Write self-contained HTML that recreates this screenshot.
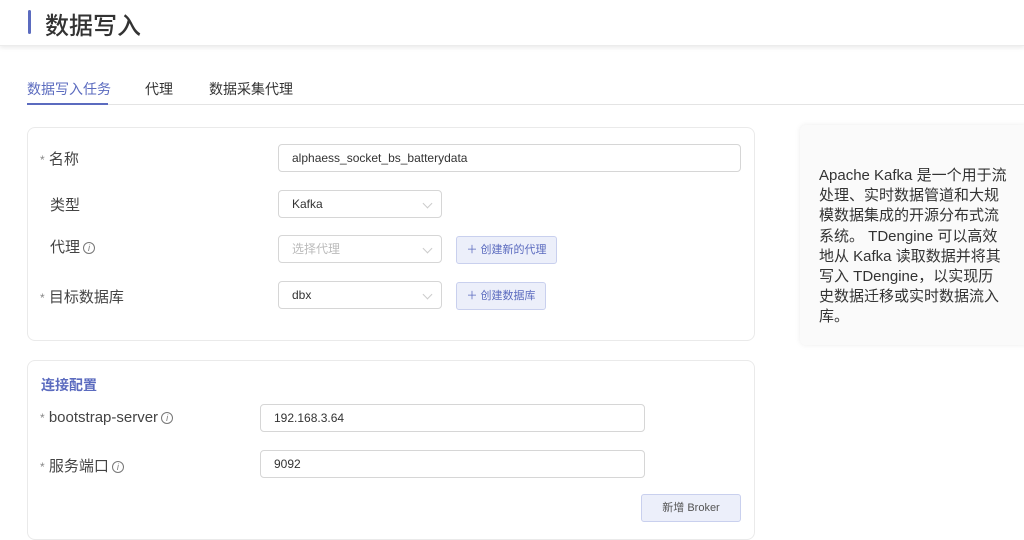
<!DOCTYPE html>
<html><head><meta charset="utf-8"><style>
*{margin:0;padding:0;box-sizing:border-box}
body{width:1024px;height:525px;overflow:hidden;background:#fff;font-family:"Liberation Sans","Noto Sans CJK SC",sans-serif;color:#333;position:relative}
.a{position:absolute}
.hdr{left:0;top:0;width:1024px;height:46px;background:#fff;box-shadow:0 2px 4px rgba(0,0,0,.08);border-bottom:1px solid #ececec}
.bar{left:28px;top:10px;width:3px;height:24px;background:#5b6bbf;border-radius:2px}
.title{left:45px;top:6px;font-size:24px;color:#333;font-weight:500}
.tab{top:79px;font-size:14px;color:#333}
.card{border:1px solid #eaeaea;border-radius:8px;background:#fff}
.lbl{font-size:15px;color:#444}
.star{color:#888;font-size:12px}
.inp{border:1px solid #d6d6d6;border-radius:4px;height:28px;font-size:12px;line-height:26px;padding-left:13px;color:#333;background:#fff}
.ph{color:#bbb}
.chev{position:absolute;right:10px;top:9px;width:7px;height:7px;border-right:1px solid #ccc;border-bottom:1px solid #ccc;transform:rotate(45deg)}
.btn{border:1px solid #c9d0ee;background:#eceffa;border-radius:3px;height:28px;font-size:11px;color:#5b6bbf;line-height:26px;text-align:center}
.i{display:inline-block;width:12px;height:12px;border:1px solid #777;border-radius:50%;font-size:9px;line-height:10px;text-align:center;font-style:italic;color:#777;vertical-align:1px;margin-left:3px}
.side{left:800px;top:125px;width:230px;height:220px;background:#fafafa;box-shadow:0 0 6px rgba(0,0,0,.08);border-radius:6px}
.side p{position:absolute;left:19px;top:41px;white-space:nowrap;font-size:15px;line-height:20.2px;color:#333}
</style></head><body>
<div class="a hdr"></div>
<div class="a bar"></div>
<div class="a title">数据写入</div>
<div class="a tab" style="left:27px;color:#5b6bbf">数据写入任务</div>
<div class="a tab" style="left:145px">代理</div>
<div class="a tab" style="left:209px">数据采集代理</div>
<div class="a" style="left:27px;top:104px;width:997px;height:1px;background:#e4e4e4"></div>
<div class="a" style="left:27px;top:103px;width:81px;height:2px;background:#5b6bbf"></div>

<div class="a card" style="left:27px;top:127px;width:728px;height:214px"></div>
<div class="a lbl" style="left:40px;top:148px"><span class="star">*</span> 名称</div>
<div class="a inp" style="left:278px;top:144px;width:463px">alphaess_socket_bs_batterydata</div>
<div class="a lbl" style="left:50px;top:194px">类型</div>
<div class="a inp" style="left:278px;top:190px;width:164px">Kafka<span class="chev"></span></div>
<div class="a lbl" style="left:50px;top:236px">代理<span class="i">i</span></div>
<div class="a inp ph" style="left:278px;top:235px;width:164px">选择代理<span class="chev"></span></div>
<div class="a btn" style="left:456px;top:236px;width:101px">＋ 创建新的代理</div>
<div class="a lbl" style="left:40px;top:286px"><span class="star">*</span> 目标数据库</div>
<div class="a inp" style="left:278px;top:281px;width:164px">dbx<span class="chev"></span></div>
<div class="a btn" style="left:456px;top:282px;width:90px">＋ 创建数据库</div>

<div class="a card" style="left:27px;top:360px;width:728px;height:180px"></div>
<div class="a" style="left:41px;top:375px;font-size:14px;font-weight:bold;color:#5b6bbf">连接配置</div>
<div class="a lbl" style="left:40px;top:409px"><span class="star">*</span> bootstrap-server<span class="i">i</span></div>
<div class="a inp" style="left:260px;top:404px;width:385px">192.168.3.64</div>
<div class="a lbl" style="left:40px;top:455px"><span class="star">*</span> 服务端口<span class="i">i</span></div>
<div class="a inp" style="left:260px;top:450px;width:385px">9092</div>
<div class="a btn" style="left:641px;top:494px;width:100px;color:#555">新增 Broker</div>

<div class="a side"><p>Apache Kafka 是一个用于流<br>处理、实时数据管道和大规<br>模数据集成的开源分布式流<br>系统。 TDengine 可以高效<br>地从 Kafka 读取数据并将其<br>写入 TDengine，以实现历<br>史数据迁移或实时数据流入<br>库。</p></div>
</body></html>
